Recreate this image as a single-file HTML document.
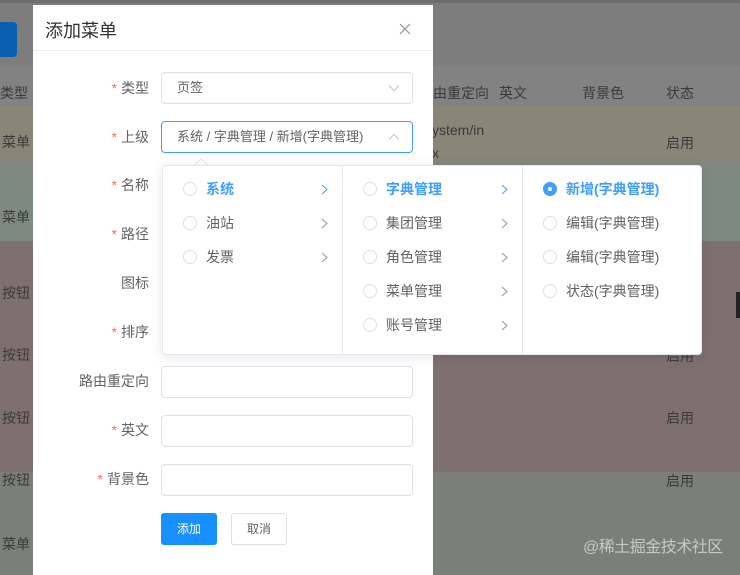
<!DOCTYPE html>
<html><head><meta charset="utf-8"><style>
*{box-sizing:border-box;margin:0;padding:0}
body{width:740px;height:569px;overflow:hidden;position:relative;font-family:"Liberation Sans","Noto Sans CJK SC",sans-serif;font-size:14px;color:#606266;background:#7d7d7d}
.band{position:absolute;left:0;width:740px}
.bt{position:absolute;font-size:14px;color:#3a3a3a}
.dlg{position:absolute;left:33px;top:5px;width:400px;height:570px;background:#fff}
.title{position:absolute;left:12px;top:12px;font-size:18px;color:#303133}
.close{position:absolute;left:366px;top:18px}
.hline{position:absolute;left:0;top:45px;width:400px;height:1px;background:#ebeef5}
.lbl{position:absolute;right:284px;font-size:14px;color:#606266;white-space:nowrap;line-height:20px}
.lbl i{color:#f56c6c;font-style:normal;margin-right:4px}
.inp{position:absolute;left:128px;width:252px;height:32px;border:1px solid #dcdfe6;border-radius:4px;font-size:13px;line-height:30px;padding-left:15px;color:#606266}
.btn{position:absolute;top:508px;height:32px;border-radius:3px;font-size:12px;line-height:30px;text-align:center}
.dd{position:absolute;left:162px;top:165px;width:540px;height:190px;background:#fff;border:1px solid #e4e7ed;border-radius:4px;box-shadow:0 2px 12px rgba(0,0,0,.1)}
.col{position:absolute;top:0;width:180px;height:188px}
.col+.col{border-left:1px solid #e4e7ed}
.it{position:absolute;left:0;width:180px;height:34px;line-height:34px;font-size:14px;color:#606266}
.it .r{position:absolute;left:20px;top:10px;width:14px;height:14px;border:1px solid #dcdfe6;border-radius:50%}
.it .t{position:absolute;left:43px}
.it .a{position:absolute;left:158px;top:12px}
.it.on{color:#409eff;font-weight:bold}
.it .r.sel{background:#409eff;border-color:#409eff}
.it .r.sel:after{content:"";position:absolute;left:4px;top:4px;width:4px;height:4px;border-radius:50%;background:#fff}
</style></head><body>
<div class="band" style="top:0;height:3px;background:#6e6e6e"></div>
<div class="band" style="top:66px;height:40px;background:#828282"></div>
<div class="band" style="top:106px;height:55px;background:#898577"></div>
<div class="band" style="top:161px;height:80px;background:#7e8a80"></div>
<div class="band" style="top:241px;height:231px;background:#7f7070"></div>
<div class="band" style="top:472px;height:97px;background:#7a8079"></div>
<div style="position:absolute;left:0;top:22px;width:17px;height:35px;background:#0b5fb0;border-radius:0 4px 4px 0"></div>
<div style="position:absolute;left:736px;top:292px;width:4px;height:26px;background:#222"></div>
<div class="bt" style="left:0;top:83px">类型</div>
<div class="bt" style="left:2px;top:132px">菜单</div>
<div class="bt" style="left:2px;top:207px">菜单</div>
<div class="bt" style="left:2px;top:283px">按钮</div>
<div class="bt" style="left:2px;top:345px">按钮</div>
<div class="bt" style="left:2px;top:408px">按钮</div>
<div class="bt" style="left:2px;top:470px">按钮</div>
<div class="bt" style="left:2px;top:534px">菜单</div>
<div class="bt" style="left:433px;top:83px">由重定向</div>
<div class="bt" style="left:499px;top:83px">英文</div>
<div class="bt" style="left:582px;top:83px">背景色</div>
<div class="bt" style="left:666px;top:83px">状态</div>
<div class="bt" style="left:432px;top:122px">ystem/in</div>
<div class="bt" style="left:432px;top:145px">x</div>
<div class="bt" style="left:666px;top:133px">启用</div>
<div class="bt" style="left:666px;top:346px">启用</div>
<div class="bt" style="left:666px;top:408px">启用</div>
<div class="bt" style="left:666px;top:471px">启用</div>
<div class="bt" style="left:583px;top:533px;color:#c8c8c8;font-size:16px;letter-spacing:-0.5px">@稀土掘金技术社区</div>
<div class="dlg">
<div class="title">添加菜单</div>
<svg class="close" width="12" height="12" viewBox="0 0 12 12"><path d="M1 1L11 11M11 1L1 11" stroke="#909399" stroke-width="1.2"/></svg>
<div class="hline"></div>
<div class="lbl" style="top:73px"><i>*</i>类型</div>
<div class="lbl" style="top:122px"><i>*</i>上级</div>
<div class="lbl" style="top:170px"><i>*</i>名称</div>
<div class="lbl" style="top:219px"><i>*</i>路径</div>
<div class="lbl" style="top:268px">图标</div>
<div class="lbl" style="top:317px"><i>*</i>排序</div>
<div class="lbl" style="top:366px">路由重定向</div>
<div class="lbl" style="top:415px"><i>*</i>英文</div>
<div class="lbl" style="top:464px"><i>*</i>背景色</div>
<div class="inp" style="top:67px">页签<svg style="position:absolute;right:12px;top:11px" width="12" height="8" viewBox="0 0 12 8"><path d="M1 1.5L6 6.5L11 1.5" stroke="#c0c4cc" fill="none"/></svg></div>
<div class="inp" style="top:116px;border-color:#409eff">系统 / 字典管理 / 新增(字典管理)<svg style="position:absolute;right:12px;top:11px" width="12" height="8" viewBox="0 0 12 8"><path d="M1 6.5L6 1.5L11 6.5" stroke="#c0c4cc" fill="none"/></svg></div>
<div class="inp" style="top:361px"></div>
<div class="inp" style="top:410px"></div>
<div class="inp" style="top:459px"></div>
<div class="btn" style="left:128px;width:56px;background:#1890ff;color:#fff;border:1px solid #1890ff">添加</div>
<div class="btn" style="left:198px;width:56px;background:#fff;color:#606266;border:1px solid #dcdfe6">取消</div>
</div>
<div style="position:absolute;left:196px;top:160px;width:10px;height:10px;background:#fff;border-left:1px solid #e4e7ed;border-top:1px solid #e4e7ed;transform:rotate(45deg);z-index:1"></div>
<div class="dd" style="z-index:2">
<div class="col" style="left:0">
<div class="it on" style="top:6px"><span class="r"></span><span class="t">系统</span><svg class="a" width="7" height="11" viewBox="0 0 7 11"><path d="M1 1L6 5.5L1 10" stroke="currentColor" fill="none"/></svg></div>
<div class="it" style="top:40px"><span class="r"></span><span class="t">油站</span><svg class="a" width="7" height="11" viewBox="0 0 7 11"><path d="M1 1L6 5.5L1 10" stroke="#909399" fill="none"/></svg></div>
<div class="it" style="top:74px"><span class="r"></span><span class="t">发票</span><svg class="a" width="7" height="11" viewBox="0 0 7 11"><path d="M1 1L6 5.5L1 10" stroke="#909399" fill="none"/></svg></div>
</div>
<div class="col" style="left:179px">
<div class="it on" style="top:6px"><span class="r"></span><span class="t">字典管理</span><svg class="a" width="7" height="11" viewBox="0 0 7 11"><path d="M1 1L6 5.5L1 10" stroke="currentColor" fill="none"/></svg></div>
<div class="it" style="top:40px"><span class="r"></span><span class="t">集团管理</span><svg class="a" width="7" height="11" viewBox="0 0 7 11"><path d="M1 1L6 5.5L1 10" stroke="#909399" fill="none"/></svg></div>
<div class="it" style="top:74px"><span class="r"></span><span class="t">角色管理</span><svg class="a" width="7" height="11" viewBox="0 0 7 11"><path d="M1 1L6 5.5L1 10" stroke="#909399" fill="none"/></svg></div>
<div class="it" style="top:108px"><span class="r"></span><span class="t">菜单管理</span><svg class="a" width="7" height="11" viewBox="0 0 7 11"><path d="M1 1L6 5.5L1 10" stroke="#909399" fill="none"/></svg></div>
<div class="it" style="top:142px"><span class="r"></span><span class="t">账号管理</span><svg class="a" width="7" height="11" viewBox="0 0 7 11"><path d="M1 1L6 5.5L1 10" stroke="#909399" fill="none"/></svg></div>
</div>
<div class="col" style="left:359px">
<div class="it on" style="top:6px"><span class="r sel"></span><span class="t">新增(字典管理)</span></div>
<div class="it" style="top:40px"><span class="r"></span><span class="t">编辑(字典管理)</span></div>
<div class="it" style="top:74px"><span class="r"></span><span class="t">编辑(字典管理)</span></div>
<div class="it" style="top:108px"><span class="r"></span><span class="t">状态(字典管理)</span></div>
</div>
</div>
</body></html>
